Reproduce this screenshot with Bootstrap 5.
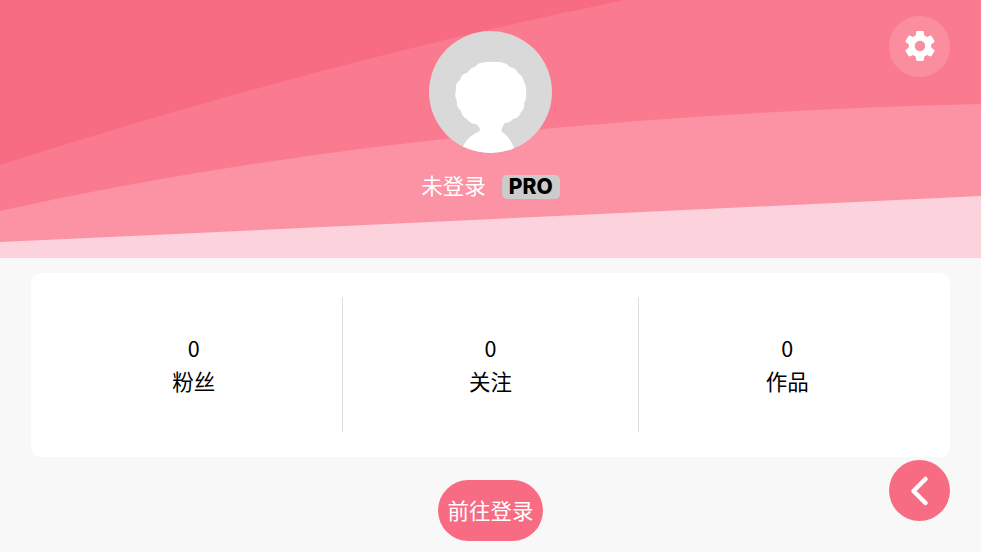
<!DOCTYPE html>
<html lang="zh">
<head>
  <meta charset="UTF-8">
  <title>我的</title>
  <link href="https://cdn.jsdelivr.net/npm/bootstrap@5.3.2/dist/css/bootstrap.min.css" rel="stylesheet">
  <style>
    html, body { height: 552px; overflow: hidden; }
    body { background-color: #f8f8f8; font-family: "Noto Sans CJK SC", "Liberation Sans", sans-serif; color: #000; }
    .top-area { height: 258px; padding-top: 31px; }
    .top-bg { position: absolute; top: 0; left: 0; width: 100%; height: 100%; }
    .top-content { z-index: 1; }
    .avatar-wrap { width: 123px; height: 122px; }
    .user-line { margin-top: 21px; height: 26px; gap: 16px; color: #fff; font-size: 21.5px; }
    .user-name { margin-top: -4px; }
    .pro-tag { background-color: #cbcbcb; color: #000; font-family: Inter, "Liberation Sans", sans-serif; font-weight: 800; font-size: 21px; line-height: 24px; height: 24px; width: 58px; border-radius: 5px; text-align: center; }
    .round-btn { width: 61px; height: 61px; border-radius: 50%; border: 0; padding: 0; position: absolute; right: 31px; }
    .settings-btn { top: 15.5px; background-color: rgba(255,255,255,.15); z-index: 1; }
    .back-btn { top: 460px; background-color: #f76c82; }
    .stats-box { margin: 15px 31px 0 31px; height: 184px; background-color: #fff; border-radius: 10px; padding: 23.5px 15px 25px; }
    .stat-item { flex: 1 1 0; font-size: 21.5px; line-height: 33px; padding-bottom: 1px; }
    .stat-item + .stat-item { border-left: 1px solid #ddd; }
    .login-btn { background-color: #f76c82; color: #fff; width: 105px; height: 61px; border-radius: 30.5px; border: 0; padding: 0; font-size: 21.5px; margin-top: 23px; white-space: nowrap; }
    .login-btn:hover { background-color: #f76c82; color: #fff; }
  </style>
</head>
<body>

<div class="top-area position-relative">
  <svg class="top-bg" viewBox="0 0 981 258" preserveAspectRatio="none">
    <rect width="981" height="258" fill="#fa7b8f"/>
    <path d="M0 0H625Q330 60 0 165Z" fill="#f76c82"/>
    <path d="M0 211Q420 118 981 104V258H0Z" fill="#fc93a5"/>
    <path d="M0 242Q520 218 981 196V258H0Z" fill="#fcd3dc"/>
  </svg>
  <div class="top-content position-relative d-flex flex-column align-items-center">
    <div class="avatar-wrap">
      <svg width="123" height="122" viewBox="0 0 123 122">
        <defs><clipPath id="avatarClip"><ellipse cx="61.5" cy="61" rx="61.5" ry="61"/></clipPath></defs>
        <ellipse cx="61.500" cy="61" rx="61.500" ry="61" fill="#d9d9d9"/>
        <g clip-path="url(#avatarClip)" fill="#fff">
          <path d="M51 32Q60 30 71 31Q78 32 81 36Q87 37 89 42Q94 45 95 51Q98 55 97 62Q98 68 95 72Q96 78 92 81Q90 87 84 88Q81 92 76 92Q73 95 73 98H51Q50 95 47 93Q41 93 38 88Q33 86 32 80Q27 76 28 70Q25 65 27 59Q26 52 31 49Q32 43 38 42Q42 36 46 36Q48 33 51 32Z"/>
          <path d="M51 96Q52 100 49 101C42 104 37 109 33 117V125H88L85 117C82 109 78 104 73 101Q72 99 73 96Z"/>
        </g>
      </svg>
    </div>
    <div class="user-line d-flex align-items-center">
      <span class="user-name">未登录</span>
      <span class="pro-tag">PRO</span>
    </div>
  </div>
  <button type="button" class="round-btn settings-btn d-flex align-items-center justify-content-center" aria-label="设置">
    <svg width="36" height="36" viewBox="0 0 24 24" fill="#fff">
      <path d="M19.43 12.98c.04-.32.07-.64.07-.98s-.03-.66-.07-.98l2.11-1.65c.19-.15.24-.42.12-.64l-2-3.46c-.12-.22-.39-.3-.61-.22l-2.49 1c-.52-.4-1.08-.73-1.69-.98l-.38-2.65C14.46 2.18 14.25 2 14 2h-4c-.25 0-.46.18-.49.42l-.38 2.65c-.61.25-1.17.59-1.69.98l-2.49-1c-.23-.09-.49 0-.61.22l-2 3.46c-.13.22-.07.49.12.64l2.11 1.65c-.04.32-.07.65-.07.98s.03.66.07.98l-2.11 1.65c-.19.15-.24.42-.12.64l2 3.46c.12.22.39.3.61.22l2.49-1c.52.4 1.08.73 1.69.98l.38 2.65c.03.24.24.42.49.42h4c.25 0 .46-.18.49-.42l.38-2.65c.61-.25 1.17-.59 1.69-.98l2.49 1c.23.09.49 0 .61-.22l2-3.46c.12-.22.07-.49-.12-.64l-2.11-1.65zM12 15.500c-1.93 0-3.5-1.57-3.5-3.5s1.57-3.5 3.5-3.5 3.5 1.57 3.5 3.5-1.57 3.5-3.5 3.5z"/>
    </svg>
  </button>
</div>

<div class="stats-box d-flex">
  <div class="stat-item d-flex flex-column align-items-center justify-content-center"><span>0</span><span>粉丝</span></div>
  <div class="stat-item d-flex flex-column align-items-center justify-content-center"><span>0</span><span>关注</span></div>
  <div class="stat-item d-flex flex-column align-items-center justify-content-center"><span>0</span><span>作品</span></div>
</div>

<div class="d-flex justify-content-center">
  <button type="button" class="btn login-btn">前往登录</button>
</div>

<button type="button" class="round-btn back-btn d-flex align-items-center justify-content-center" aria-label="返回">
  <svg width="20" height="32" viewBox="0 0 20 32" fill="none" stroke="#fff" stroke-width="4.5" stroke-linecap="round" stroke-linejoin="round">
    <path d="M15.500 4L3.500 16L15.500 28"/>
  </svg>
</button>

<script src="https://cdn.jsdelivr.net/npm/bootstrap@5.3.2/dist/js/bootstrap.bundle.min.js"></script>
</body>
</html>
